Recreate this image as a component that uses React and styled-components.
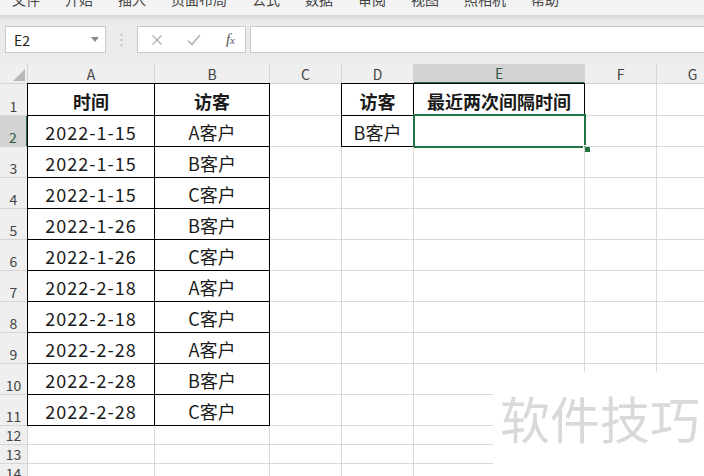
import React from 'react'
import styled, { createGlobalStyle, css } from 'styled-components'

const GlobalStyle = createGlobalStyle`
  html, body {
    margin: 0;
    padding: 0;
    overflow: hidden;
    background: #fff;
  }
  body {
    font-family: "Noto Sans CJK SC", "Liberation Sans", sans-serif;
  }
`

const menus = ['文件', '开始', '插入', '页面布局', '公式', '数据', '审阅', '视图', '照相机', '帮助']
const columns = [
  { key: 'A', width: 127 },
  { key: 'B', width: 115 },
  { key: 'C', width: 72 },
  { key: 'D', width: 72 },
  { key: 'E', width: 171 },
  { key: 'F', width: 72 },
  { key: 'G', width: 72 },
]

const dates = ['2022-1-15', '2022-1-15', '2022-1-15', '2022-1-26', '2022-1-26', '2022-2-18', '2022-2-18', '2022-2-28', '2022-2-28', '2022-2-28']
const visitors = ['A客户', 'B客户', 'C客户', 'B客户', 'C客户', 'A客户', 'C客户', 'A客户', 'B客户', 'C客户']

function cellContent(row, col) {
  if (row === 1) {
    if (col === 'A') return { text: '时间', bold: true, boxed: true }
    if (col === 'B') return { text: '访客', bold: true, boxed: true }
    if (col === 'D') return { text: '访客', bold: true, boxed: true }
    if (col === 'E') return { text: '最近两次间隔时间', bold: true, boxed: true }
  }
  if (row >= 2 && row <= 11) {
    if (col === 'A') return { text: dates[row - 2], boxed: true, date: true }
    if (col === 'B') return { text: visitors[row - 2], boxed: true }
  }
  if (row === 2) {
    if (col === 'D') return { text: 'B客户', boxed: true }
    if (col === 'E') return { text: '', boxed: true, selected: true }
  }
  return null
}

function rowHeight(row) {
  if (row === 1) return 32
  if (row <= 11) return 31
  return 19
}

export default function App() {
  const rows = Array.from({ length: 14 }, (_, i) => i + 1)
  return (
    <Page>
      <GlobalStyle />
      <MenuBar>
        {menus.map((m) => (
          <MenuItem key={m}>{m}</MenuItem>
        ))}
      </MenuBar>
      <FormulaArea>
        <NameBox>
          <span>E2</span>
          <svg width="8" height="5" viewBox="0 0 8 5">
            <path d="M0 0 L8 0 L4 5 Z" fill="#8a8a8a" />
          </svg>
        </NameBox>
        <Grip>
          <svg width="3" height="14" viewBox="0 0 3 14">
            <circle cx="1.5" cy="2" r="1" fill="#b5b5b5" />
            <circle cx="1.5" cy="7" r="1" fill="#b5b5b5" />
            <circle cx="1.5" cy="12" r="1" fill="#b5b5b5" />
          </svg>
        </Grip>
        <FxBox>
          <svg width="12" height="12" viewBox="0 0 12 12">
            <path d="M1.5 1.5 L10.5 10.5 M10.5 1.5 L1.5 10.5" stroke="#b3b3b3" strokeWidth="1.4" />
          </svg>
          <svg width="14" height="12" viewBox="0 0 14 12">
            <path d="M1 6.5 L5 10.5 L13 1" stroke="#b3b3b3" strokeWidth="1.6" fill="none" />
          </svg>
          <FxLabel>f<small>x</small></FxLabel>
        </FxBox>
        <FormulaInput />
      </FormulaArea>
      <Sheet>
        <Corner>
          <svg width="12" height="12" viewBox="0 0 12 12">
            <path d="M12 0 L12 12 L0 12 Z" fill="#b9b9b9" />
          </svg>
        </Corner>
        {columns.map((c) => (
          <ColHeader key={c.key} $active={c.key === 'E'}>{c.key}</ColHeader>
        ))}
        {rows.map((r) => (
          <React.Fragment key={r}>
            <RowHeader $active={r === 2} style={{ height: rowHeight(r) }}>{r}</RowHeader>
            {columns.map((c, ci) => {
              const data = cellContent(r, c.key)
              const prevBoxed = ci > 0 && cellContent(r, columns[ci - 1].key)?.boxed
              const aboveBoxed = r > 1 && cellContent(r - 1, c.key)?.boxed
              return (
                <Cell
                  key={c.key}
                  $boxed={data?.boxed}
                  $top={data?.boxed && !aboveBoxed}
                  $left={data?.boxed && !prevBoxed}
                  $bold={data?.bold}
                  $date={data?.date}
                >
                  {data?.text}
                  {data?.selected && (
                    <Selection>
                      <FillHandle />
                    </Selection>
                  )}
                </Cell>
              )
            })}
          </React.Fragment>
        ))}
      </Sheet>
      <Watermark>软件技巧</Watermark>
    </Page>
  )
}

const Page = styled.div`
  position: relative;
  width: 704px;
  height: 476px;
  overflow: hidden;
  background: #fff;
`

const MenuBar = styled.div`
  display: flex;
  gap: 25px;
  height: 15px;
  padding-left: 12px;
  background: #f3f3f3;
  overflow: hidden;
`

const MenuItem = styled.span`
  font-size: 14px;
  line-height: 14px;
  margin-top: -8px;
  color: #444;
  white-space: nowrap;
`

const FormulaArea = styled.div`
  display: flex;
  align-items: flex-start;
  height: 49px;
  box-sizing: border-box;
  padding: 11px 0 0 5px;
  background: linear-gradient(#d6d6d6 0px, #e6e6e6 4px, #ebebeb 9px, #ebebeb 100%);
`

const boxBase = css`
  box-sizing: border-box;
  height: 27px;
  background: #fff;
  border: 1px solid #c9c9c9;
`

const NameBox = styled.div`
  ${boxBase};
  width: 101px;
  display: flex;
  align-items: center;
  justify-content: space-between;
  padding: 0 6px 0 8px;
  font-size: 14px;
  color: #222;
`

const Grip = styled.div`
  width: 31px;
  height: 27px;
  display: flex;
  align-items: center;
  justify-content: center;
`

const FxBox = styled.div`
  ${boxBase};
  width: 109px;
  display: flex;
  align-items: center;
  justify-content: space-between;
  padding: 0 10px 0 13px;
`

const FxLabel = styled.span`
  font-family: "Liberation Serif", serif;
  font-style: italic;
  font-size: 15px;
  color: #555;
  small {
    font-size: 11px;
  }
`

const FormulaInput = styled.div`
  ${boxBase};
  flex: 1;
  margin-left: 4px;
  border-right: none;
`

const Sheet = styled.div`
  display: grid;
  grid-template-columns: 28px ${columns.map((c) => c.width + 'px').join(' ')};
  grid-auto-rows: auto;
  width: max-content;
`

const headerBase = css`
  box-sizing: border-box;
  background: #efefef;
  border-right: 1px solid #d4d4d4;
  border-bottom: 1px solid #d4d4d4;
  color: #444;
  font-size: 14px;
`

const Corner = styled.div`
  ${headerBase};
  height: 20px;
  display: flex;
  align-items: flex-end;
  justify-content: flex-end;
  padding: 0 2px 2px 0;
`

const ColHeader = styled.div`
  ${headerBase};
  height: 20px;
  display: flex;
  align-items: center;
  justify-content: center;
  line-height: 1;
  ${(p) =>
    p.$active &&
    css`
      background: #d3d3d3;
      border-bottom: 2px solid #217346;
      color: #2f5d40;
    `}
`

const RowHeader = styled.div`
  ${headerBase};
  display: flex;
  align-items: flex-end;
  justify-content: center;
  line-height: 16px;
  padding-bottom: 1px;
  ${(p) =>
    p.$active &&
    css`
      background: #d3d3d3;
      border-right: 2px solid #217346;
      color: #2f5d40;
    `}
`

const Cell = styled.div`
  position: relative;
  box-sizing: border-box;
  display: flex;
  align-items: center;
  justify-content: center;
  padding-top: 2px;
  border-right: 1px solid #d9d9d9;
  border-bottom: 1px solid #d9d9d9;
  font-size: 18px;
  color: #1a1a1a;
  white-space: nowrap;
  font-weight: ${(p) => (p.$bold ? 700 : 400)};
  letter-spacing: ${(p) => (p.$date ? '1px' : '0')};
  ${(p) =>
    p.$boxed &&
    css`
      border-right-color: #000;
      border-bottom-color: #000;
    `}
  box-shadow: ${(p) => {
    const s = []
    if (p.$top) s.push('0 -1px 0 #000')
    if (p.$left) s.push('-1px 0 0 #000')
    if (p.$top && p.$left) s.push('-1px -1px 0 #000')
    return s.length ? s.join(', ') : 'none'
  }};
`

const Selection = styled.div`
  position: absolute;
  top: -2px;
  left: -1px;
  right: -2px;
  bottom: -2px;
  border: 2px solid #217346;
`

const FillHandle = styled.div`
  position: absolute;
  right: -6px;
  bottom: -6px;
  width: 6px;
  height: 6px;
  background: #217346;
  border: 1px solid #fff;
  border-right: none;
  border-bottom: none;
`

const Watermark = styled.div`
  position: absolute;
  left: 493px;
  top: 372px;
  width: 211px;
  height: 104px;
  box-sizing: border-box;
  padding: 20px 0 0 7px;
  background: #fff;
  font-size: 50px;
  line-height: 1;
  color: #d9d9d9;
  white-space: nowrap;
`
